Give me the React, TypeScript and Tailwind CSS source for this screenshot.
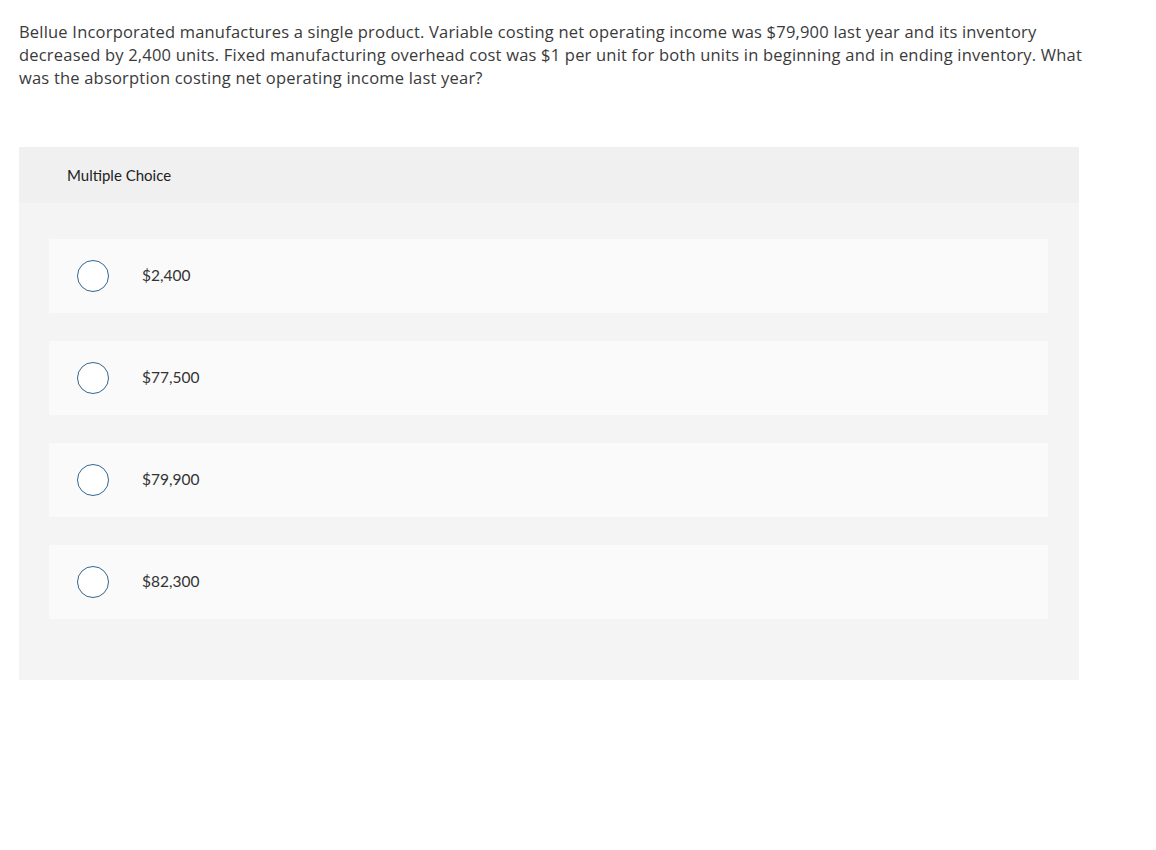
import React from "react";

const choices: string[] = ["$2,400", "$77,500", "$79,900", "$82,300"];

const App: React.FC = () => {
    return (
        <div className="w-[1156px] min-h-[850px] bg-white font-['Lato',_'Liberation_Sans',_sans-serif] text-[#333333]">
            <div className="w-[1100px] pl-[19px] pt-[20px]">
                <p className="w-[1066px] font-['Open_Sans',_'Lato',_sans-serif] text-[16.5px] tracking-[0.2px] leading-[23px] text-[#3a3a3a]">
                    Bellue Incorporated manufactures a single product. Variable costing net operating income was $79,900 last year and its inventory decreased by 2,400 units. Fixed manufacturing overhead cost was $1 per unit for both units in beginning and in ending inventory. What was the absorption costing net operating income last year?
                </p>

                <div className="mt-[58px] w-[1060px] bg-[#f4f4f4]">
                    <div className="h-[56px] flex items-center pl-[48px] bg-[#f0f0f0]">
                        <span className="text-[15px] text-[#222222]">Multiple Choice</span>
                    </div>
                    <div className="flex flex-col gap-[28px] pl-[30px] pt-[36px] pb-[61px]">
                        {choices.map((item, index) => (
                            <label key={index} className="w-[999px] h-[74px] flex items-center bg-[#fafafa] cursor-pointer">
                                <span className="ml-[28px] w-[32px] h-[32px] rounded-full border border-[#33668f] bg-white" />
                                <span className="ml-[33px] text-[15.5px] text-[#333333]">{item}</span>
                            </label>
                        ))}
                    </div>
                </div>
            </div>
        </div>
    );
};

export default App;
